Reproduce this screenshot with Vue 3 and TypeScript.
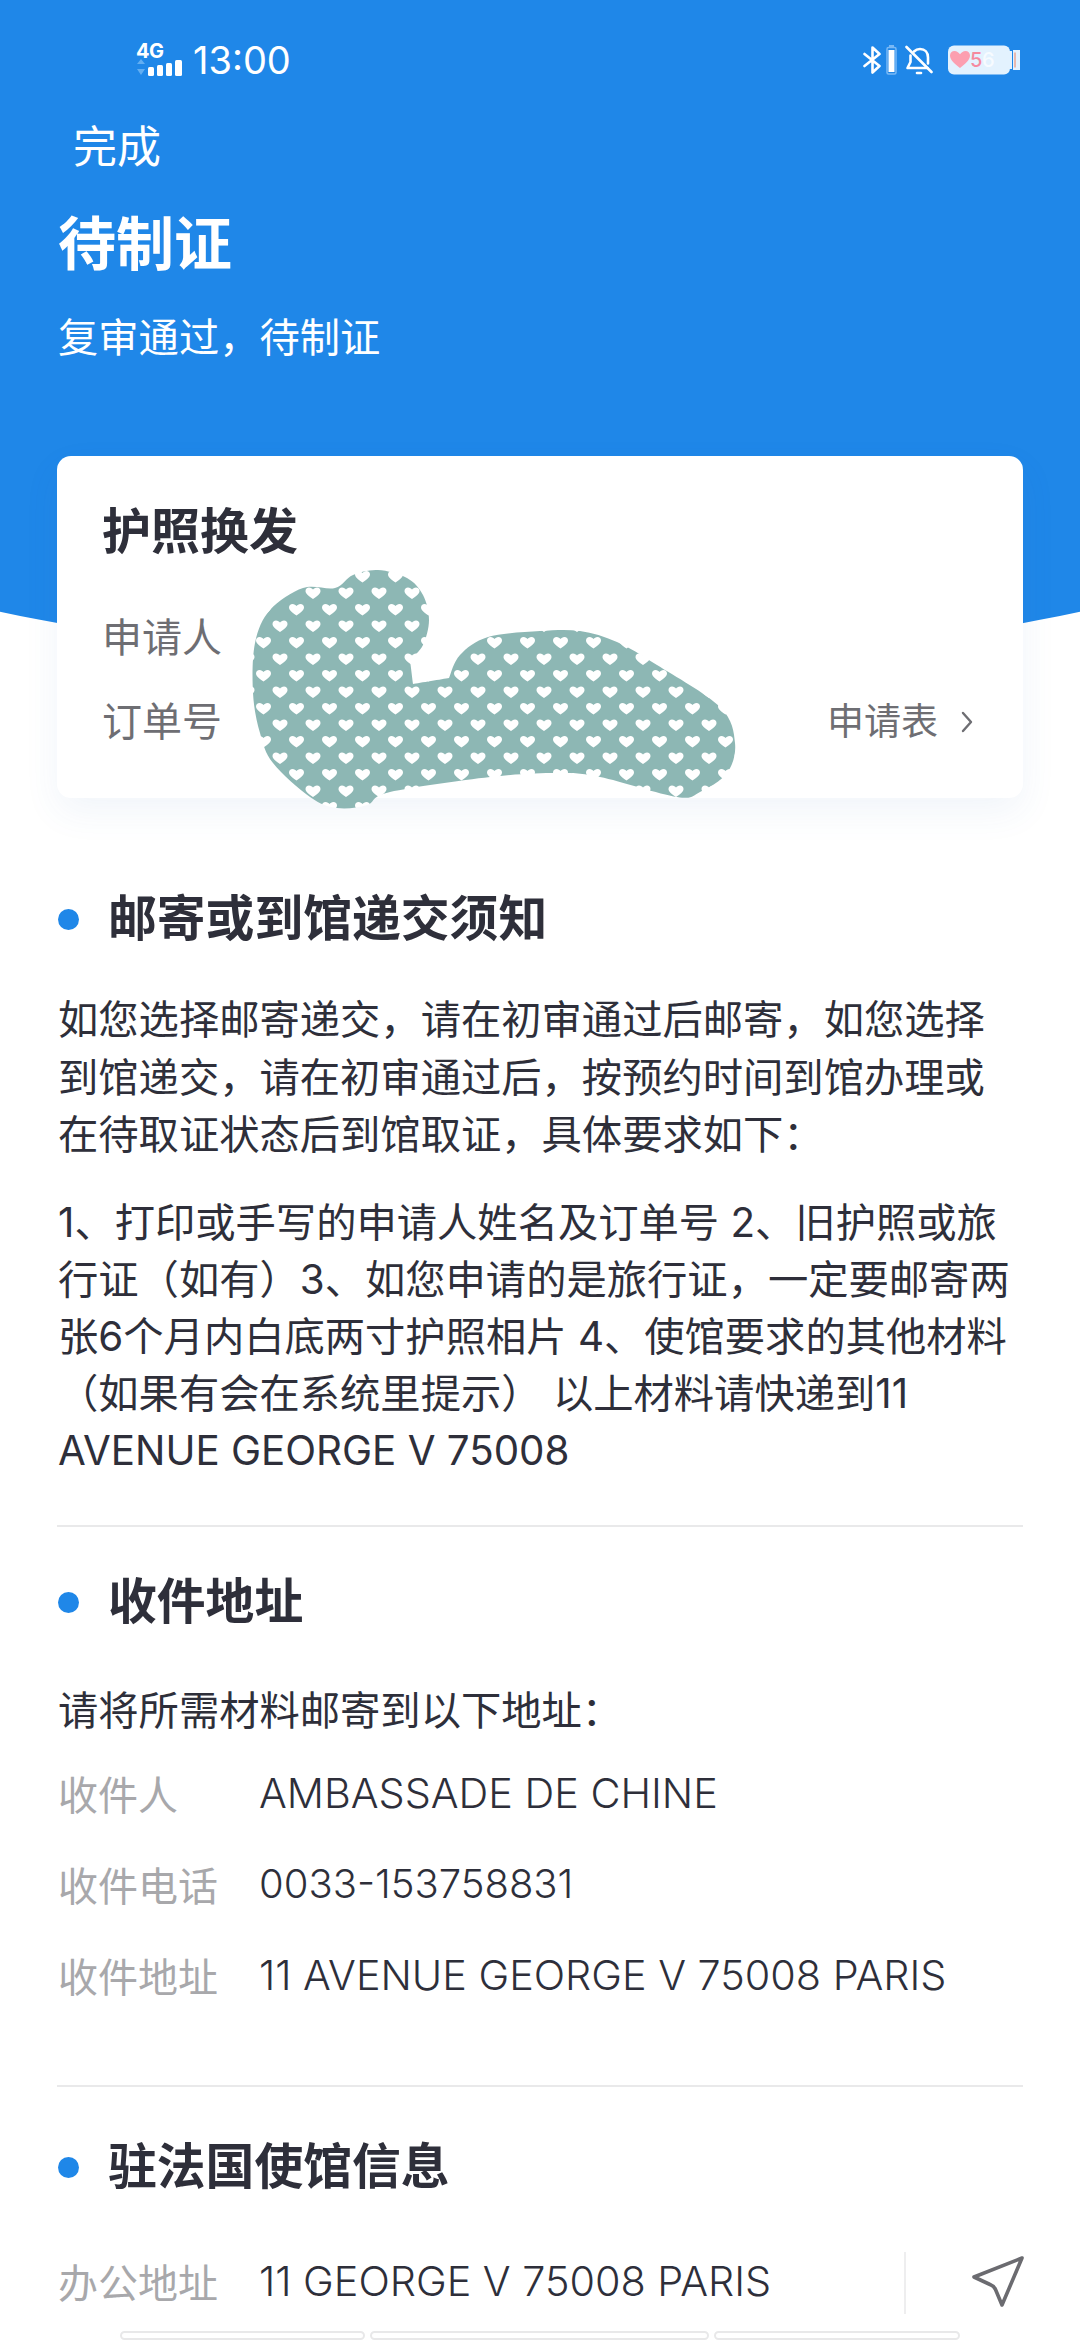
<script setup lang="ts">
const shippingRows = [
  { label: '收件人', value: 'AMBASSADE DE CHINE', phone: false },
  { label: '收件电话', value: '0033-153758831', phone: true },
  { label: '收件地址', value: '11 AVENUE GEORGE V 75008 PARIS', phone: false },
]

// outline of the scribble, traced off the screenshot; doubled points make the corners sharp
const outline: [number, number][] = [
  [378, 570], [407, 578], [423, 595], [429, 620], [423, 645], [410, 660], [410, 660],
  [413, 684], [413, 684], [449, 678], [449, 678], [460, 655], [488, 637], [540, 631],
  [580, 631], [617, 642], [657, 665], [720, 707], [735, 743], [727, 773], [700, 792],
  [677, 797], [600, 777], [557, 773], [490, 777], [390, 792], [367, 805], [337, 808],
  [310, 797], [273, 763], [260, 733], [253, 693], [255, 643], [270, 610], [303, 588],
  [335, 588], [353, 575],
]

function smoothPath(pts: [number, number][]) {
  const n = pts.length
  let d = `M${pts[0][0]} ${pts[0][1]}`
  for (let i = 0; i < n; i++) {
    const p0 = pts[(i - 1 + n) % n]
    const p1 = pts[i]
    const p2 = pts[(i + 1) % n]
    const p3 = pts[(i + 2) % n]
    const c1x = p1[0] + (p2[0] - p0[0]) / 6
    const c1y = p1[1] + (p2[1] - p0[1]) / 6
    const c2x = p2[0] - (p3[0] - p1[0]) / 6
    const c2y = p2[1] - (p3[1] - p1[1]) / 6
    d += `C${c1x} ${c1y} ${c2x} ${c2y} ${p2[0]} ${p2[1]}`
  }
  return d + 'Z'
}

const blob = smoothPath(outline)

const heart = 'c-4-3-7.5-5-7.5-8 0-2 1.500-3.500 3.500-3.500 2 0 3 1 4 2 1-1 2-2 4-2 2 0 3.500 1.500 3.500 3.500 0 3-3.500 5-7.500 8z'
const heartTiles = [
  [0, 6], [33, 6], [0, 39], [33, 39], [16.5, 22.5],
].map(([x, y]) => `M${x} ${y}${heart}`).join('')
</script>

<template>
  <div class="page">
    <header class="hero">
      <div class="statusbar">
        <div class="net">
          <span class="net-type">4G</span>
          <svg class="net-bars" width="48" height="20" viewBox="0 0 48 20">
            <path d="M1 7l4-5 4 5zM1 12l4 6 4-6z" fill="#62aef2" />
            <rect x="12" y="10" width="6" height="9" rx="1.500" fill="#fff" />
            <rect x="21" y="8" width="6" height="11" rx="1.500" fill="#fff" />
            <rect x="30" y="6" width="6" height="13" rx="1.500" fill="#fff" />
            <rect x="39" y="3" width="7" height="16" rx="1.500" fill="#fff" />
          </svg>
        </div>
        <span class="time">13:00</span>
        <div class="status-right">
          <svg width="18" height="28" viewBox="0 0 18 28" fill="none" stroke="#fff" stroke-width="2.600" stroke-linejoin="round" stroke-linecap="round">
            <path d="M1.500 8l15 12-7 6.500v-25l7 6.500-15 12" />
          </svg>
          <svg width="11" height="30" viewBox="0 0 11 30">
            <rect x="3" y="0" width="5" height="3" fill="#79b9f5" />
            <rect x="1" y="2.500" width="9" height="26.500" rx="1.500" fill="none" stroke="#79b9f5" stroke-width="1.500" />
            <rect x="2.500" y="5" width="6" height="22" fill="#fff" />
          </svg>
          <svg class="bell" width="28" height="30" viewBox="0 0 28 30" fill="none" stroke="#fff" stroke-width="2.600" stroke-linecap="round" stroke-linejoin="round">
            <path d="M1.500 2l25 25" />
            <path d="M9 6.500C11 4.500 13 4 15 4c5 0 8 3.500 8 8.500v6" />
            <path d="M5.500 10.500V17l-3 6h20" />
            <path d="M12 28h4" />
          </svg>
          <svg class="battery" width="72" height="30" viewBox="0 0 72 30">
            <rect x="0" y="0.500" width="62" height="29" rx="6" fill="#e3f2fe" />
            <path d="M60 6h4v18h-4zM65 5h7v20h-7z" fill="#e3f2fe" />
            <rect x="66" y="7.500" width="2" height="15" fill="#e9b9ae" />
            <path d="M12 23C7 19 2 15 2 10.500 2 8 4 6 6.500 6 8.800 6 10.500 7.500 12 9.200 13.500 7.500 15.200 6 17.500 6 20 6 22 8 22 10.500 22 15 17 19 12 23z" fill="#fc9fb0" />
            <text x="22" y="22" class="battery-five">5</text>
            <text x="34" y="22" class="battery-six">6</text>
          </svg>
        </div>
      </div>
      <div class="nav-done">完成</div>
      <h1 class="hero-title">待制证</h1>
      <p class="hero-sub">复审通过，待制证</p>
    </header>

    <section class="order-card">
      <h2 class="order-title">护照换发</h2>
      <div class="order-row">申请人</div>
      <div class="order-row order-row-link">
        <span>订单号</span>
        <span class="order-link">
          申请表
          <svg width="14" height="24" viewBox="0 0 14 24" fill="none" stroke="#6e6e73" stroke-width="2.400" stroke-linecap="round" stroke-linejoin="round">
            <path d="M3 3l8 9-8 9" />
          </svg>
        </span>
      </div>
    </section>

    <!-- hand-drawn redaction sitting over the card -->
    <svg class="scribble" width="1080" height="900" viewBox="0 0 1080 900">
      <defs>
        <pattern id="hearts" patternUnits="userSpaceOnUse" x="313" y="593" width="33" height="33">
          <rect width="33" height="33" fill="#8db7b4" />
          <path :d="heartTiles" fill="#fff" />
        </pattern>
      </defs>
      <path :d="blob" fill="url(#hearts)" />
    </svg>

    <section class="block block-first">
      <h3 class="block-title">邮寄或到馆递交须知</h3>
      <p class="para para-first">如您选择邮寄递交，请在初审通过后邮寄，如您选择到馆递交，请在初审通过后，按预约时间到馆办理或在待取证状态后到馆取证，具体要求如下：</p>
      <p class="para para-second">1、打印或手写的申请人姓名及订单号 2、旧护照或旅行证（如有）3、如您申请的是旅行证，一定要邮寄两张6个月内白底两寸护照相片 4、使馆要求的其他材料（如果有会在系统里提示） 以上材料请快递到11 AVENUE GEORGE V 75008</p>
    </section>

    <div class="rule rule-one"></div>

    <section class="block block-second">
      <h3 class="block-title">收件地址</h3>
      <p class="para para-intro">请将所需材料邮寄到以下地址：</p>
      <div class="info-list">
        <div v-for="row in shippingRows" :key="row.label" class="info-row">
          <span class="info-label">{{ row.label }}</span>
          <span class="info-value" :class="{ 'info-value-phone': row.phone }">{{ row.value }}</span>
        </div>
      </div>
    </section>

    <div class="rule rule-two"></div>

    <section class="block block-third">
      <h3 class="block-title">驻法国使馆信息</h3>
      <div class="info-row office-row">
        <span class="info-label">办公地址</span>
        <span class="info-value">11 GEORGE V 75008 PARIS</span>
        <span class="office-divider"></span>
        <svg class="nav-icon" width="54" height="54" viewBox="0 0 54 54" fill="none" stroke="#6b6b70" stroke-width="3.600" stroke-linejoin="round">
          <path d="M52 4L4 23l16 7.500q4 1.500 5.500 5L32 51z" />
        </svg>
      </div>
    </section>

    <div class="tabs">
      <span class="tab tab-a"></span>
      <span class="tab tab-b"></span>
      <span class="tab tab-c"></span>
    </div>
  </div>
</template>

<style>
html,
body {
  background: #fff;
}
</style>

<style scoped>
.page {
  position: relative;
  width: 1080px;
  height: 2340px;
  overflow: hidden;
  background: #fff;
  color: #2e2f3a;
  font-family: "Inter", "Noto Sans CJK SC", sans-serif;
}
h1,
h2,
h3,
p {
  margin: 0;
  font-weight: 400;
}
.hero {
  height: 669px;
  background: #1f87e8;
  color: #fff;
  clip-path: circle(2570px at 540px -1901px);
}
.statusbar {
  display: flex;
  align-items: center;
  height: 60px;
  padding: 30px 60px 0 136px;
}
.net {
  display: flex;
  flex-direction: column;
  width: 48px;
}
.net-type {
  height: 14px;
  font-size: 20px;
  line-height: 14px;
  font-weight: 700;
  letter-spacing: -0.500px;
}
.net-bars {
  margin-top: -1px;
}
.time {
  margin-left: 9px;
  font-size: 38px;
  line-height: 44px;
}
.status-right {
  display: flex;
  align-items: center;
  gap: 5px;
  margin-left: auto;
}
.bell {
  margin-left: 3px;
}
.battery {
  margin-left: 10px;
}
.battery-five,
.battery-six {
  font-family: "Inter", sans-serif;
  font-size: 20px;
  font-weight: 500;
}
.battery-five {
  fill: #f58a9e;
}
.battery-six {
  fill: #f7fbff;
}
.nav-done {
  margin-top: 29px;
  padding-left: 73px;
  font-size: 44px;
  line-height: 56px;
}
.hero-title {
  margin-top: 29px;
  padding-left: 58px;
  font-size: 58px;
  line-height: 80px;
  font-weight: 700;
}
.hero-sub {
  margin-top: 26px;
  padding-left: 58px;
  font-size: 40.300px;
  line-height: 56px;
}
.order-card {
  position: relative;
  margin: -213px 57px 0;
  padding: 44px 46px 48px 45px;
  border-radius: 14px;
  background: #fff;
  box-shadow: 0 14px 36px rgba(60, 110, 180, 0.07);
}
.order-title {
  font-size: 49px;
  line-height: 64px;
  font-weight: 700;
}
.order-row {
  margin-top: 28px;
  font-size: 40px;
  line-height: 56px;
  color: #6e6e73;
}
.order-title + .order-row {
  margin-top: 46px;
}
.order-row-link {
  display: flex;
  justify-content: space-between;
}
.order-link {
  display: flex;
  align-items: center;
  gap: 22px;
  padding-right: 3px;
  font-size: 37px;
}
.scribble {
  position: absolute;
  top: 0;
  left: 0;
}
.block {
  padding: 0 58px;
}
.block-first {
  margin-top: 89px;
}
.block-second {
  margin-top: 43px;
}
.block-third {
  margin-top: 48px;
}
.block-title {
  position: relative;
  padding-left: 50px;
  font-size: 48.800px;
  line-height: 64px;
  font-weight: 700;
}
.block-title::before {
  content: "";
  position: absolute;
  left: 0;
  top: 22px;
  width: 21px;
  height: 21px;
  border-radius: 50%;
  background: #1f87e8;
}
.para {
  font-size: 40.300px;
  line-height: 57.500px;
}
.para-first {
  margin-top: 40px;
}
.para-second {
  margin-top: 30px;
  line-height: 57px;
}
.para-intro {
  margin-top: 48px;
}
.rule {
  height: 2px;
  margin: 0 57px;
  background: #e9e9ea;
}
.rule-one {
  margin-top: 46px;
}
.rule-two {
  margin-top: 82px;
}
.info-list {
  display: flex;
  flex-direction: column;
  gap: 34px;
  margin-top: 25px;
}
.info-row {
  display: flex;
  align-items: center;
  height: 57px;
  font-size: 40px;
}
.info-label {
  flex: none;
  width: 201px;
  color: #a8a8ab;
}
.info-value {
  flex: 1;
  font-size: 41.300px;
  font-weight: 300;
}
.info-value-phone {
  font-size: 40px;
}
.office-row {
  margin-top: 53px;
}
.office-divider {
  flex: none;
  width: 2px;
  height: 62px;
  margin-top: 5px;
  background: #eeeeef;
}
.nav-icon {
  flex: none;
  margin-left: 64px;
  margin-right: -2px;
}
.tabs {
  display: flex;
  gap: 5px;
  margin-top: 22px;
  padding-left: 120px;
}
.tab {
  height: 9px;
  border: 2px solid #e8e8e9;
  border-radius: 5px;
  box-sizing: border-box;
}
.tab-a {
  width: 245px;
}
.tab-b {
  width: 339px;
}
.tab-c {
  width: 246px;
}
</style>
